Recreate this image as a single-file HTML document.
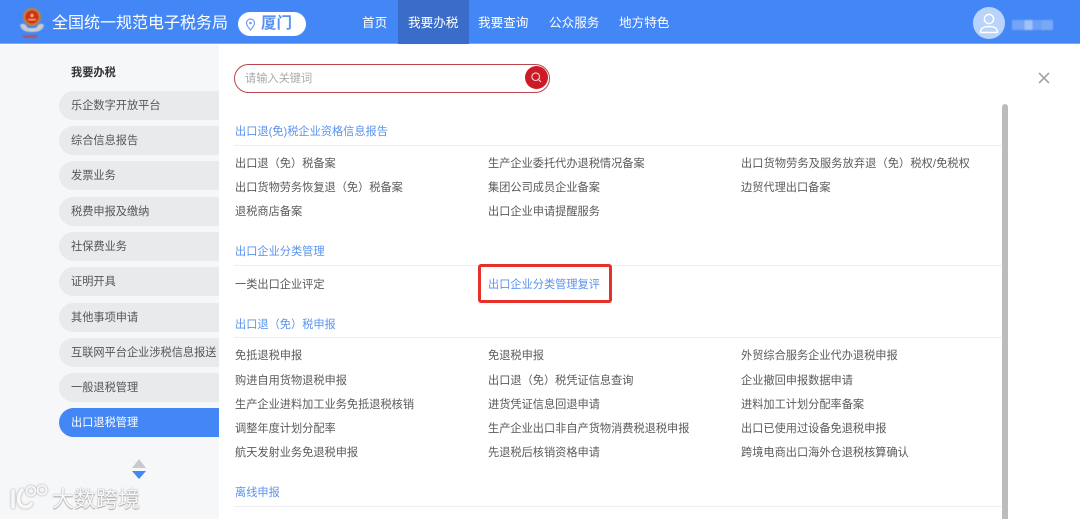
<!DOCTYPE html>
<html lang="zh"><head><meta charset="utf-8"><title>全国统一规范电子税务局</title>
<style>
html,body{margin:0;padding:0;width:1080px;height:519px;overflow:hidden;background:#fff;font-family:"Liberation Sans","Noto Sans CJK SC",sans-serif}
#p{position:relative;width:1080px;height:519px;overflow:hidden}
.a{position:absolute;white-space:nowrap}
.t{position:absolute;white-space:nowrap;font-size:11.2px;line-height:16px;color:#5a5a5a;filter:blur(.3px)}
.h{color:#5a93ee}
.l{position:absolute;left:234px;width:768px;height:1px;background:#eceef0}
.s{position:absolute;left:59px;width:160px;height:29px;background:#e9eaec;border-radius:15px 0 0 15px;font-size:11.2px;line-height:31px;color:#555;text-indent:12px;white-space:nowrap;overflow:hidden}
.n{position:absolute;top:14px;font-size:12.6px;line-height:18px;color:#fff;white-space:nowrap;filter:blur(.25px)}
</style></head><body><div id="p">
<div class="a" style="left:0;top:0;width:1080px;height:44px;background:#4386f5;border-bottom:1px solid #7aa9f3;box-sizing:border-box"></div>
<div class="a" style="left:0;top:45px;width:219px;height:474px;background:#f6f7f9"></div>

<svg class="a" style="left:19px;top:6px;filter:blur(.4px)" width="27" height="34" viewBox="0 0 27 34">
<path d="M1 19 C5 16 7 19 9 22 L17 22 C19 19 21 16 25 19 C24 24 20 26 13 26 C6 26 2 24 1 19Z" fill="#c6ccd2"/>
<circle cx="13" cy="11" r="9" fill="#c47f38"/><circle cx="13" cy="11" r="6.5" fill="#cf2c22"/>
<circle cx="13" cy="9.5" r="1.7" fill="#eec34a"/><rect x="9" y="13" width="8" height="1.5" fill="#eec34a"/>
<rect x="4" y="29" width="14" height="3" fill="#d8402c" opacity=".65"/></svg>
<div class="a" style="left:52px;top:12px;font-size:16px;line-height:24px;color:#fff;filter:blur(.3px)">全国统一规范电子税务局</div>
<div class="a" style="left:238px;top:12px;width:68px;height:24px;background:#fff;border-radius:12px"></div>
<svg class="a" style="left:245px;top:18px" width="11" height="13" viewBox="0 0 11 13"><path d="M5.5 1C3 1 1.5 3 1.5 5C1.5 7.5 5.5 12 5.5 12C5.5 12 9.5 7.5 9.5 5C9.5 3 8 1 5.5 1Z" fill="none" stroke="#6b9ef2" stroke-width="1.2"/><circle cx="5.5" cy="5" r="1.3" fill="#6b9ef2"/></svg>
<div class="a" style="left:261px;top:12px;font-size:15.5px;line-height:24px;font-weight:700;color:#5a92f3">厦门</div>

<div class="a" style="left:398px;top:0;width:71px;height:44px;background:#3a6cca"></div>
<div class="n" style="left:362px">首页</div>
<div class="n" style="left:408px">我要办税</div>
<div class="n" style="left:478px">我要查询</div>
<div class="n" style="left:549px">公众服务</div>
<div class="n" style="left:619px">地方特色</div>

<svg class="a" style="left:973px;top:7px" width="32" height="32" viewBox="0 0 32 32"><circle cx="16" cy="16" r="16" fill="#b9d3fa"/><circle cx="16" cy="12" r="4.6" fill="none" stroke="#fff" stroke-width="1.5"/><path d="M7.5 25.5C7.5 21 10.5 19.5 16 19.5C21.5 19.5 24.5 21 24.5 25.5Z" fill="none" stroke="#fff" stroke-width="1.5" stroke-linejoin="round"/></svg>
<div class="a" style="left:1012px;top:20px;width:41px;height:10px;background:linear-gradient(90deg,#74a5f6 0,#74a5f6 30%,#a2c2f8 30%,#a2c2f8 50%,#6c9ff5 50%,#6c9ff5 72%,#79a9f6 72%);filter:blur(.8px)"></div>

<div class="a" style="left:71px;top:65px;font-size:11.2px;line-height:16px;color:#333;font-weight:700">我要办税</div>
<div class="s" style="top:91px">乐企数字开放平台</div>
<div class="s" style="top:126px">综合信息报告</div>
<div class="s" style="top:161px">发票业务</div>
<div class="s" style="top:197px">税费申报及缴纳</div>
<div class="s" style="top:232px">社保费业务</div>
<div class="s" style="top:267px">证明开具</div>
<div class="s" style="top:303px">其他事项申请</div>
<div class="s" style="top:338px">互联网平台企业涉税信息报送</div>
<div class="s" style="top:373px">一般退税管理</div>
<div class="s" style="top:408px;background:#4386f5;color:#fff">出口退税管理</div>
<div class="a" style="left:132px;top:459px;width:0;height:0;border-left:7.5px solid transparent;border-right:7.5px solid transparent;border-bottom:9px solid #c8cacd"></div>
<div class="a" style="left:132px;top:471px;width:0;height:0;border-left:7.5px solid transparent;border-right:7.5px solid transparent;border-top:8px solid #4386f5"></div>

<svg class="a" style="left:9px;top:483px;filter:drop-shadow(0 0 1px #999)" width="44" height="28" viewBox="0 0 44 28"><g fill="none" stroke="#f8f8f8" stroke-linecap="round"><path d="M4 8L4 24" stroke-width="3.5"/><path d="M13 7C8 12 8 23 16 24C19 24 21 23 22 21" stroke-width="3.5"/><circle cx="22" cy="8" r="4.5" stroke-width="1.8"/><circle cx="33" cy="7" r="4.5" stroke-width="1.8"/></g></svg>
<div class="a" style="left:52px;top:485px;width:90px;font-size:22px;line-height:30px;color:#f8f8f8;text-shadow:0 0 1.5px #999,0 1px 1px #aaa;filter:blur(.3px)">大数跨境</div>

<div class="a" style="left:234px;top:64px;width:316px;height:29px;box-sizing:border-box;border:1px solid #b9474f;border-radius:15px;background:#fff"></div>
<div class="a" style="left:245px;top:71px;font-size:11.2px;line-height:16px;color:#aaa;filter:blur(.3px)">请输入关键词</div>
<div class="a" style="left:525px;top:66px;width:23px;height:23px;border-radius:50%;background:#cc1b27"></div>
<svg class="a" style="left:530px;top:71px" width="13" height="13" viewBox="0 0 13 13"><circle cx="5.7" cy="5.7" r="3.8" fill="none" stroke="#f6d5d7" stroke-width="1.1"/><path d="M8.5 8.5L11 11" stroke="#f6d5d7" stroke-width="1.2"/></svg>
<svg class="a" style="left:1037px;top:71px" width="14" height="14" viewBox="0 0 14 14"><path d="M2 2L12 12M12 2L2 12" stroke="#a5a5a5" stroke-width="1.6"/></svg>
<div class="a" style="left:1002px;top:104px;width:6px;height:415px;background:#bcbcbc;border-radius:3px 3px 0 0"></div>

<div class="t h" style="left:235px;top:124px">出口退(免)税企业资格信息报告</div>
<div class="l" style="top:145px"></div>
<div class="t" style="left:235px;top:156px">出口退（免）税备案</div>
<div class="t" style="left:488px;top:156px">生产企业委托代办退税情况备案</div>
<div class="t" style="left:741px;top:156px;letter-spacing:.1px">出口货物劳务及服务放弃退（免）税权/免税权</div>
<div class="t" style="left:235px;top:180px">出口货物劳务恢复退（免）税备案</div>
<div class="t" style="left:488px;top:180px">集团公司成员企业备案</div>
<div class="t" style="left:741px;top:180px">边贸代理出口备案</div>
<div class="t" style="left:235px;top:204px">退税商店备案</div>
<div class="t" style="left:488px;top:204px">出口企业申请提醒服务</div>

<div class="t h" style="left:235px;top:244px">出口企业分类管理</div>
<div class="l" style="top:265px"></div>
<div class="t" style="left:235px;top:277px">一类出口企业评定</div>
<div class="t h" style="left:488px;top:277px">出口企业分类管理复评</div>
<div class="a" style="left:478px;top:264px;width:134px;height:39px;box-sizing:border-box;border:3px solid #e8302a;border-radius:3px"></div>

<div class="t h" style="left:235px;top:317px">出口退（免）税申报</div>
<div class="l" style="top:337px"></div>
<div class="t" style="left:235px;top:348px">免抵退税申报</div>
<div class="t" style="left:488px;top:348px">免退税申报</div>
<div class="t" style="left:741px;top:348px">外贸综合服务企业代办退税申报</div>
<div class="t" style="left:235px;top:373px">购进自用货物退税申报</div>
<div class="t" style="left:488px;top:373px">出口退（免）税凭证信息查询</div>
<div class="t" style="left:741px;top:373px">企业撤回申报数据申请</div>
<div class="t" style="left:235px;top:397px">生产企业进料加工业务免抵退税核销</div>
<div class="t" style="left:488px;top:397px">进货凭证信息回退申请</div>
<div class="t" style="left:741px;top:397px">进料加工计划分配率备案</div>
<div class="t" style="left:235px;top:421px">调整年度计划分配率</div>
<div class="t" style="left:488px;top:421px">生产企业出口非自产货物消费税退税申报</div>
<div class="t" style="left:741px;top:421px">出口已使用过设备免退税申报</div>
<div class="t" style="left:235px;top:445px">航天发射业务免退税申报</div>
<div class="t" style="left:488px;top:445px">先退税后核销资格申请</div>
<div class="t" style="left:741px;top:445px">跨境电商出口海外仓退税核算确认</div>

<div class="t h" style="left:235px;top:485px">离线申报</div>
<div class="l" style="top:506px"></div>
</div></body></html>
